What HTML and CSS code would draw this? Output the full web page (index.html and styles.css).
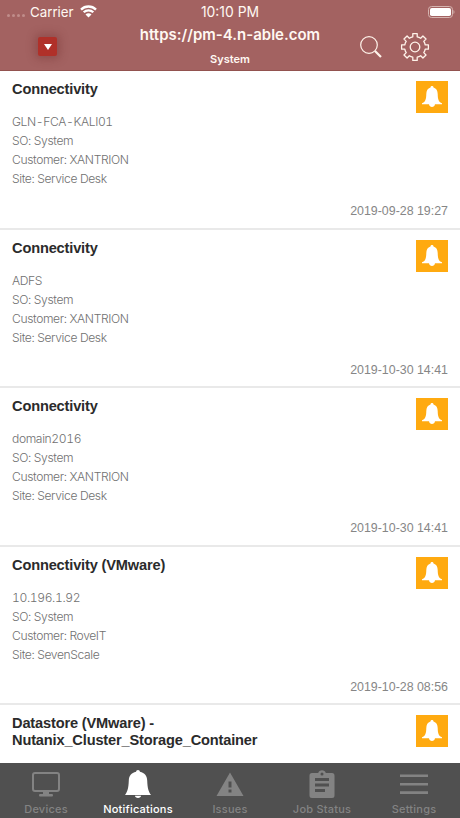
FILE: index.html
```
<!DOCTYPE html>
<html lang="en">
<head>
  <meta charset="UTF-8">
  <meta name="viewport" content="width=device-width, initial-scale=1">
  <title>Notifications</title>
  <link rel="stylesheet" href="styles.css">
</head>
<body>
  <svg class="symbols" width="0" height="0">
    <symbol id="bell" viewBox="0 0 26 28">
      <path d="M13 0c1.100 0 1.900.8 1.900 1.800C19.800 2.800 22 6 22.200 10.500c.3 7.500 1.200 11 3.800 14.500H0c2.600-3.500 3.500-7 3.800-14.500C4 6 6.200 2.800 11.100 1.800 11.100.8 11.900 0 13 0zM10 25.800h6c0 1.300-1.300 2.200-3 2.200s-3-.9-3-2.200z"/>
    </symbol>
    <symbol id="bellSmall" viewBox="0 0 20 21">
      <path d="M10 0c.9 0 1.500.6 1.500 1.400C14.400 2.200 15.600 4.500 15.700 8c.1 5 .8 8.200 4.300 9.300v1h-7C12.700 20 11.500 21 10 21s-2.700-1-3-2.700H0v-1C3.500 16.200 4.200 13 4.300 8c.1-3.500 1.300-5.800 4.200-6.600C8.500.6 9.100 0 10 0z"/>
    </symbol>
  </svg>

  <div id="header">
    <div class="statusBar">
      <div class="carrier">
        <span class="signal"><i></i><i></i><i></i><i></i></span>
        <span>Carrier</span>
        <svg class="wifi" width="17" height="13" viewBox="0 0 17 13">
          <path d="M1 4.600a10.600 10.600 0 0 1 15 0M3.700 7.300a6.800 6.800 0 0 1 9.600 0" fill="none" stroke="#fff" stroke-width="2.300"/>
          <path d="M5.500 9.400a4.200 4.200 0 0 1 6 0l-3 3z" fill="#fff"/>
        </svg>
      </div>
      <span class="clock">10:10 PM</span>
      <svg class="battery" width="27" height="12" viewBox="0 0 27 12">
        <rect x=".5" y=".5" width="24" height="11" rx="3" fill="none" stroke="#d5b4b0"/>
        <rect x="2" y="2" width="21" height="8" rx="1.800" fill="#fff"/>
        <path d="M25.500 4v4c1.300-.6 1.300-3.400 0-4z" fill="#d5b4b0"/>
      </svg>
    </div>
    <div class="navRow">
      <button class="dropdown" aria-label="Filter"><svg width="8" height="6" viewBox="0 0 8 6"><path d="M0 0h8L4 6z" fill="#fff"/></svg></button>
      <div class="heading">
        <h1>https://pm-4.n-able.com</h1>
        <p>System</p>
      </div>
      <div class="actions">
        <svg width="22" height="22" viewBox="0 0 22 22" fill="none" stroke="#fff3ea">
          <circle cx="9" cy="9" r="8.300" stroke-width="1.200"/>
          <path d="M15 15l6 6" stroke-width="2.200"/>
        </svg>
        <svg width="30" height="30" viewBox="-15 -15 30 30" fill="none" stroke="#fff3ea" stroke-width="1.300" stroke-linejoin="round">
          <path d="M-2.200-10.200V-13.400H2.200V-10.200Q4 -9.900 5.660-8.770L7.920-11.030L11.030-7.920L8.770-5.660Q9.900-4 10.200-2.200H13.400V2.200H10.200Q9.900 4 8.770 5.660L11.030 7.920L7.920 11.030L5.660 8.770Q4 9.900 2.200 10.200V13.400H-2.200V10.200Q-4 9.900-5.660 8.770L-7.920 11.030L-11.030 7.920L-8.770 5.660Q-9.900 4-10.200 2.200H-13.400V-2.200H-10.200Q-9.900-4-8.770-5.660L-11.030-7.920L-7.920-11.030L-5.660-8.770Q-4-9.900-2.200-10.200z"/>
          <circle r="4.800"/>
        </svg>
      </div>
    </div>
  </div>

  <div id="list">
    <div class="item">
      <div class="top"><h2>Connectivity</h2><span class="badge"><svg><use href="#bellSmall"/></svg></span></div>
      <div class="details">
        <p>GLN-FCA-KALI01</p>
        <p>SO: System</p>
        <p>Customer: XANTRION</p>
        <p>Site: Service Desk</p>
      </div>
      <p class="date">2019-09-28 19:27</p>
    </div>
    <div class="item">
      <div class="top"><h2>Connectivity</h2><span class="badge"><svg><use href="#bellSmall"/></svg></span></div>
      <div class="details">
        <p>ADFS</p>
        <p>SO: System</p>
        <p>Customer: XANTRION</p>
        <p>Site: Service Desk</p>
      </div>
      <p class="date">2019-10-30 14:41</p>
    </div>
    <div class="item">
      <div class="top"><h2>Connectivity</h2><span class="badge"><svg><use href="#bellSmall"/></svg></span></div>
      <div class="details">
        <p>domain2016</p>
        <p>SO: System</p>
        <p>Customer: XANTRION</p>
        <p>Site: Service Desk</p>
      </div>
      <p class="date">2019-10-30 14:41</p>
    </div>
    <div class="item">
      <div class="top"><h2>Connectivity (VMware)</h2><span class="badge"><svg><use href="#bellSmall"/></svg></span></div>
      <div class="details">
        <p>10.196.1.92</p>
        <p>SO: System</p>
        <p>Customer: RoveIT</p>
        <p>Site: SevenScale</p>
      </div>
      <p class="date">2019-10-28 08:56</p>
    </div>
    <div class="item">
      <div class="top"><h2>Datastore (VMware) -<br>Nutanix_Cluster_Storage_Container</h2><span class="badge"><svg><use href="#bellSmall"/></svg></span></div>
    </div>
  </div>

  <div id="tabBar">
    <a class="tab">
      <svg width="28" height="28" viewBox="0 0 28 28">
        <rect x="1" y="3" width="26" height="18" rx="2" fill="none" stroke="currentColor" stroke-width="2"/>
        <path d="M11 22h6v2h3q1 0 1 1.200T20 26.400H8q-1 0-1-1.200T8 24h3z" fill="currentColor"/>
      </svg>
      <span>Devices</span>
    </a>
    <a class="tab active">
      <svg width="26" height="28"><use href="#bell"/></svg>
      <span>Notifications</span>
    </a>
    <a class="tab">
      <svg width="28" height="28" viewBox="0 0 28 28">
        <path d="M14 2.500l13.500 23.500H.5zM12.500 11.500v6h3v-6zM12.500 19.500v3h3v-3z" fill="currentColor" fill-rule="evenodd"/>
      </svg>
      <span>Issues</span>
    </a>
    <a class="tab">
      <svg width="26" height="28" viewBox="0 0 26 28">
        <path d="M3 3h6.200a4 4 0 0 1 7.600 0H23q2.500 0 2.500 2.500v20Q25.500 28 23 28H3Q.5 28 .5 25.500v-20Q.5 3 3 3z" fill="currentColor"/>
        <circle cx="13" cy="4" r="1.500" fill="#505050"/>
        <path d="M6 9.500h14M6 15h14M6 20.500h10" stroke="#505050" stroke-width="2.800"/>
      </svg>
      <span>Job Status</span>
    </a>
    <a class="tab">
      <svg width="28" height="28" viewBox="0 0 28 28">
        <path d="M0 5.800h28M0 14.300h28M0 22.600h28" stroke="currentColor" stroke-width="2.600"/>
      </svg>
      <span>Settings</span>
    </a>
  </div>
</body>
</html>
```
FILE: styles.css
```
* {
  box-sizing: border-box;
}

body {
  margin: 0;
  height: 818px;
  display: flex;
  flex-direction: column;
  overflow: hidden;
  background-color: white;
  font-family: "Liberation Sans", Arial, sans-serif;
}

h1, h2, p {
  margin: 0;
}

.symbols {
  display: none;
}

#header {
  height: 71px;
  flex: none;
  background-color: #a36261;
  border-bottom: 1px solid #92524f;
  color: #fff8f2;
}

.statusBar {
  height: 23px;
  display: grid;
  grid-template-columns: 1fr auto 1fr;
  align-items: center;
  padding: 0 5px 0 7px;
  font-family: Inter, sans-serif;
  font-size: 13.300px;
}

.clock {
  margin-right: 2px;
  font-size: 13.900px;
}

.carrier {
  display: flex;
  align-items: center;
}

.signal {
  display: flex;
  gap: 2px;
  margin: 7px 5px 0 0;
}

.signal i {
  width: 3px;
  height: 3px;
  border-radius: 50%;
  background-color: #c08d8a;
}

.wifi {
  margin-left: 6px;
}

.battery {
  justify-self: end;
}

.navRow {
  height: 47px;
  display: grid;
  grid-template-columns: 1fr auto 1fr;
}

.dropdown {
  width: 19px;
  height: 19px;
  margin: 14px 0 0 38px;
  padding: 0;
  border: none;
  border-radius: 2px;
  background-color: #b03029;
  box-shadow: 0 0 9px 3px rgba(110, 40, 40, 0.35);
  display: flex;
  align-items: center;
  justify-content: center;
}

.heading {
  text-align: center;
}

.heading h1 {
  margin-top: 2px;
  font-family: Inter, sans-serif;
  font-size: 15px;
  font-weight: 600;
  line-height: 20px;
}

.heading p {
  margin-top: 7px;
  font-family: Inter, sans-serif;
  font-size: 11px;
  font-weight: 600;
  line-height: 14px;
}

.actions {
  display: flex;
  align-items: center;
  justify-content: flex-end;
  gap: 18px;
  padding-right: 30px;
}

#list {
  flex: 1;
  min-height: 0;
  overflow: hidden;
}

.item {
  height: 158.500px;
  padding: 10px 12px 0;
  border-bottom: 2px solid #e9e9e9;
  display: flex;
  flex-direction: column;
}

.top {
  display: flex;
  justify-content: space-between;
  height: 31px;
}

.top h2 {
  color: #2b2b2b;
  font-size: 14.600px;
  letter-spacing: -0.160px;
  line-height: 17px;
}

.badge {
  width: 32px;
  height: 32px;
  background-color: #ffaa10;
  color: white;
  display: flex;
  align-items: center;
  justify-content: center;
}

.badge svg {
  width: 20px;
  height: 21px;
  margin-bottom: 1px;
  fill: white;
}

.details {
  color: #707070;
  font-family: Inter, sans-serif;
  font-weight: 300;
  font-size: 12.100px;
  font-variant-numeric: tabular-nums;
  letter-spacing: -0.380px;
  line-height: 19px;
}

.date {
  margin-top: 14px;
  text-align: right;
  color: #868686;
  font-size: 12.400px;
  line-height: 19px;
}

#tabBar {
  height: 55px;
  flex: none;
  display: grid;
  grid-template-columns: repeat(5, 1fr);
  background-color: #505050;
}

.tab {
  display: flex;
  flex-direction: column;
  align-items: center;
  padding-top: 7px;
  color: #838383;
  font-family: Inter, sans-serif;
  font-size: 11px;
  font-weight: 500;
  letter-spacing: 0.220px;
  line-height: 14px;
}

.tab span {
  margin-top: 4px;
}

.tab svg {
  fill: currentColor;
}

.active {
  color: white;
}
```
